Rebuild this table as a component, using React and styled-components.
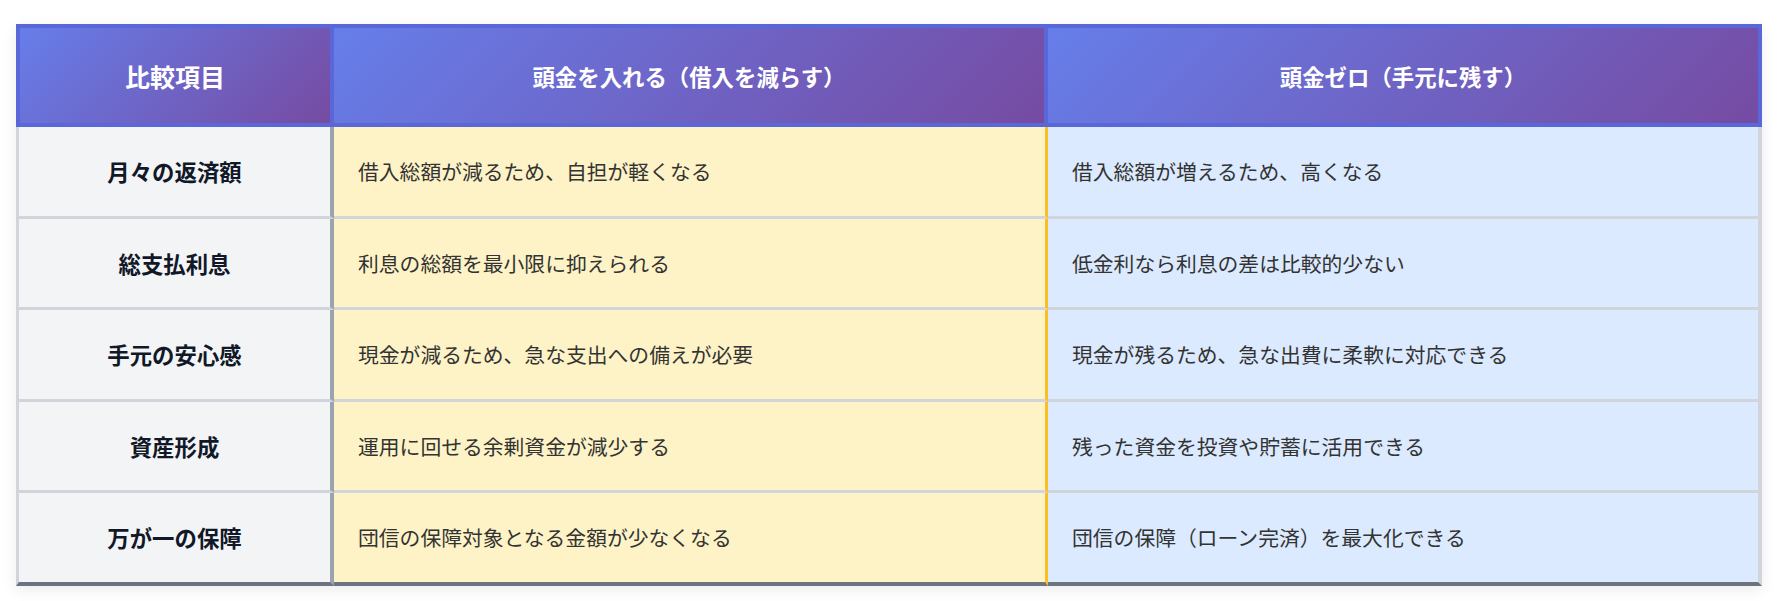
import React from "react";
import styled, { createGlobalStyle } from "styled-components";

const GlobalStyle = createGlobalStyle`
  body {
    margin: 0;
    background: #ffffff;
    font-family: "Noto Sans CJK JP", "Noto Sans", sans-serif;
  }
`;

const rows = [
  {
    label: "月々の返済額",
    down: "借入総額が減るため、自担が軽くなる",
    zero: "借入総額が増えるため、高くなる",
  },
  {
    label: "総支払利息",
    down: "利息の総額を最小限に抑えられる",
    zero: "低金利なら利息の差は比較的少ない",
  },
  {
    label: "手元の安心感",
    down: "現金が減るため、急な支出への備えが必要",
    zero: "現金が残るため、急な出費に柔軟に対応できる",
  },
  {
    label: "資産形成",
    down: "運用に回せる余剰資金が減少する",
    zero: "残った資金を投資や貯蓄に活用できる",
  },
  {
    label: "万が一の保障",
    down: "団信の保障対象となる金額が少なくなる",
    zero: "団信の保障（ローン完済）を最大化できる",
  },
];

const Page = styled.div`
  padding: 24px 20px 16px 16px;
`;

const Table = styled.table`
  width: 1746px;
  table-layout: fixed;
  border-collapse: separate;
  border-spacing: 0;
  box-shadow: 0 4px 14px rgba(0, 0, 0, 0.08);
`;

const HeadCell = styled.th`
  height: 95px;
  padding: 0 16px;
  background: linear-gradient(135deg, #667eea 0%, #764ba2 100%);
  color: #ffffff;
  font-weight: 700;
  font-size: ${(p) => (p.$first ? "25px" : "22.4px")};
  text-align: center;
  border-top: 4px solid #5a67d8;
  border-bottom: 4px solid #5a67d8;
  border-right: 4px solid #5a67d8;
  border-left: ${(p) => (p.$first ? "4px solid #5a67d8" : "none")};
`;

const LabelCell = styled.td`
  height: 88.5px;
  padding: 0 16px;
  background: #f3f4f6;
  color: #111827;
  font-weight: 700;
  font-size: 22.4px;
  text-align: center;
  border-left: 3px solid #d1d5db;
  border-right: 4px solid #9ca3af;
  border-bottom: ${(p) => (p.$last ? "4px solid #6b7280" : "3px solid #d1d5db")};
`;

const ValueCell = styled.td`
  height: 88.5px;
  padding: 0 24px;
  background: ${(p) => (p.$variant === "down" ? "#fef3c7" : "#dbeafe")};
  color: #333333;
  font-size: 20.8px;
  text-align: left;
  border-right: ${(p) =>
    p.$variant === "down" ? "3px solid #fbbf24" : "4px solid #d1d5db"};
  border-bottom: ${(p) => (p.$last ? "4px solid #6b7280" : "3px solid #d1d5db")};
`;

export default function App() {
  return (
    <Page>
      <GlobalStyle />
      <Table>
        <colgroup>
          <col style={{ width: 318 }} />
          <col style={{ width: 714 }} />
          <col style={{ width: 714 }} />
        </colgroup>
        <thead>
          <tr>
            <HeadCell $first>比較項目</HeadCell>
            <HeadCell>頭金を入れる（借入を減らす）</HeadCell>
            <HeadCell>頭金ゼロ（手元に残す）</HeadCell>
          </tr>
        </thead>
        <tbody>
          {rows.map((r, i) => {
            const last = i === rows.length - 1;
            return (
              <tr key={r.label}>
                <LabelCell $last={last}>{r.label}</LabelCell>
                <ValueCell $variant="down" $last={last}>
                  {r.down}
                </ValueCell>
                <ValueCell $variant="zero" $last={last}>
                  {r.zero}
                </ValueCell>
              </tr>
            );
          })}
        </tbody>
      </Table>
    </Page>
  );
}
